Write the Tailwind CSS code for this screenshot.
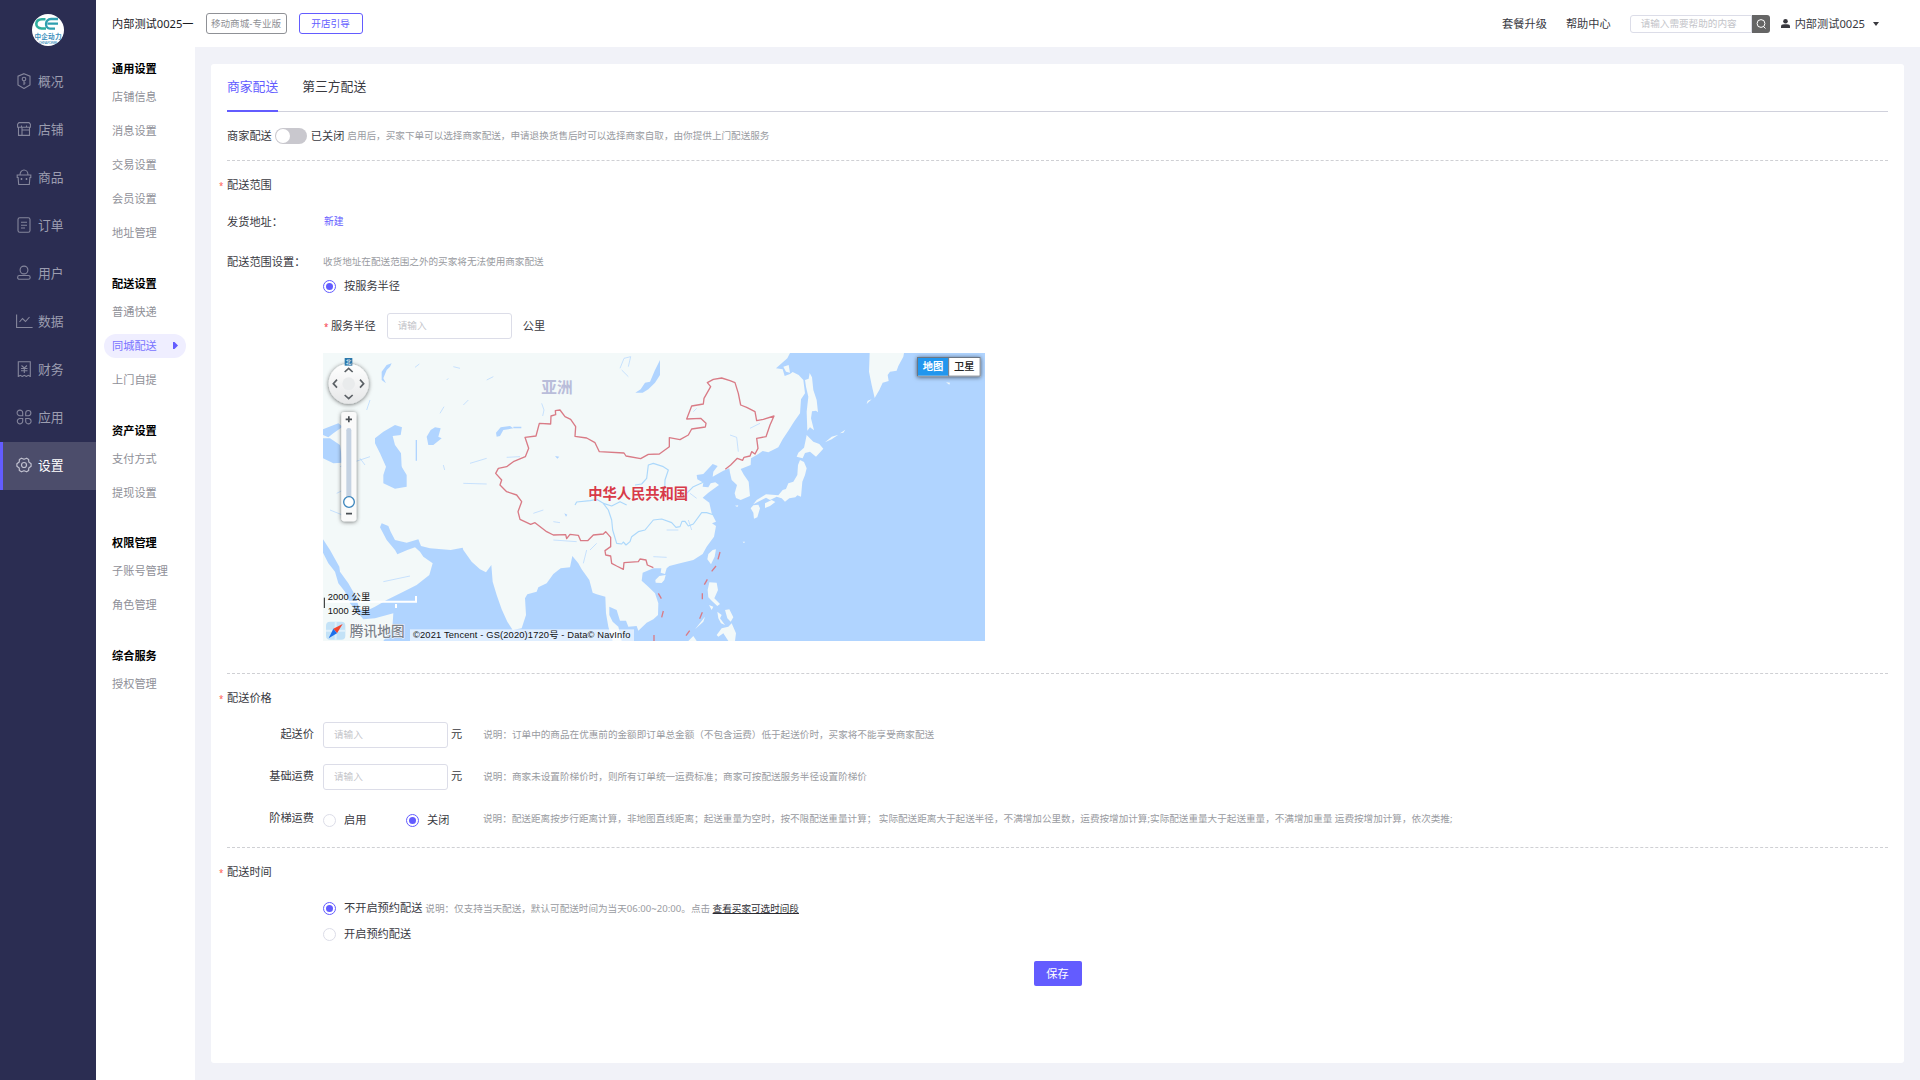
<!DOCTYPE html>
<html lang="zh-CN">
<head>
<meta charset="utf-8">
<title>同城配送</title>
<script src="https://cdn.jsdelivr.net/npm/@tailwindcss/browser@4"></script>
</head>
<body class="flex h-[1080px] w-[1920px] overflow-hidden bg-[#f1f2f8] font-['Noto_Sans','Noto_Sans_CJK_SC',sans-serif] text-[11.2px] leading-4 whitespace-nowrap text-[#39393f]">

<!-- Primary navigation -->
<nav class="flex h-full w-24 shrink-0 flex-col bg-[#2b2d52] text-[12.8px] text-[#9c9db0]">
  <div class="flex h-[58px] justify-center pt-[14px]">
    <svg class="size-8" viewBox="0 0 32 32">
      <circle cx="16" cy="16" r="16" fill="#fff"/>
      <path d="M13.5 5.2H10C2.5 5.5 2.5 14 9.500 14.500H14" fill="none" stroke="#2fae9f" stroke-width="2.600"/>
      <path d="M26 5H19C12.500 5 12.500 14.600 18 14.600H23M15.500 9.600H26" fill="none" stroke="#2f9fb0" stroke-width="2.300"/>
      <text x="2.500" y="25" font-size="6.600" font-weight="700" fill="#3d8fbd" textLength="27">中企动力</text>
      <text x="7" y="29.500" font-size="3.500" fill="#3d8fbd" textLength="18">CHINA POWER</text>
    </svg>
  </div>
  <a class="flex h-12 items-center gap-1.5 pb-0.5 pl-4"><svg class="size-4" viewBox="0 0 16 16" fill="none" stroke="#85869c" stroke-width="1.1"><path d="M8 .7 14 3.200V12L8 15.500 2 12V3.200Z"/><circle cx="8" cy="6" r="1.800"/><path d="M8 7.800V12M8 10h1.500"/></svg><span>概况</span></a>
  <a class="flex h-12 items-center gap-1.5 pb-0.5 pl-4"><svg class="size-4" viewBox="0 0 16 16" fill="none" stroke="#85869c" stroke-width="1.1"><path d="M3 1.600h10l1.400 1.600v3H1.600v-3ZM2.500 6.200v8.200h11V6.200M6 6.200v8M6 9h7.500M5.500 6.200V4.500M10.500 6.200V4.500"/></svg><span>店铺</span></a>
  <a class="flex h-12 items-center gap-1.5 pb-0.5 pl-4"><svg class="size-4" viewBox="0 0 16 16" fill="none" stroke="#85869c" stroke-width="1.1"><path d="M1.200 6h13.600v2.500h-.9l-.6 7H2.700l-.6-7h-.9ZM4 6a4 5 0 0 1 8 0"/><path d="M5.500 9v2M10.500 9v2" stroke-width="1.500"/></svg><span>商品</span></a>
  <a class="flex h-12 items-center gap-1.5 pb-0.5 pl-4"><svg class="size-4" viewBox="0 0 16 16" fill="none" stroke="#85869c" stroke-width="1.1"><rect x="2" y=".7" width="12" height="14.600" rx="1.800"/><path d="M5 5.200h6M5 8.200h6M5 11h4"/></svg><span>订单</span></a>
  <a class="flex h-12 items-center gap-1.5 pb-0.5 pl-4"><svg class="size-4" viewBox="0 0 16 16" fill="none" stroke="#85869c" stroke-width="1.1"><circle cx="8" cy="5" r="3.900"/><rect x="1.600" y="10.500" width="12.600" height="3.800" rx="1.900"/></svg><span>用户</span></a>
  <a class="flex h-12 items-center gap-1.5 pb-0.5 pl-4"><svg class="size-4 overflow-visible" viewBox="0 0 16 16" fill="none" stroke="#85869c" stroke-width="1.1"><path d="M.6 1.500v13h16M3.500 9 6.500 5.500 9.500 8.500 13.500 4"/></svg><span>数据</span></a>
  <a class="flex h-12 items-center gap-1.5 pb-0.5 pl-4"><svg class="size-4" viewBox="0 0 16 16" fill="none" stroke="#85869c" stroke-width="1.1"><path d="M2.300 15.500V.8h12v14.700l-2-1.200-2 1.200-2-1.200-2 1.200-2-1.200ZM5.500 4.500l2.800 2.500L11 4.500M5 7.500h6.500M5 9.800h6.500M8.300 7v5"/></svg><span>财务</span></a>
  <a class="flex h-12 items-center gap-1.5 pb-0.5 pl-4"><svg class="size-4" viewBox="0 0 16 16" fill="none" stroke="#85869c" stroke-width="1.1"><path d="M6.700 6.700H4A2.800 2.800 0 1 1 6.700 4ZM9.700 6.700V4a2.600 2.600 0 1 1 2.700 2.700ZM6.700 9.500V12A2.700 2.700 0 1 1 4 9.500ZM9.700 9.500h2.600A2.700 2.700 0 1 1 9.700 12Z"/></svg><span>应用</span></a>
  <a class="flex h-12 items-center gap-1.5 border-l-3 border-[#635cff] bg-[#4c4d6b] pb-0.5 pl-[13px] text-white"><svg class="size-4" viewBox="0 0 16 16" fill="none" stroke="#c0c0cf" stroke-width="1.200"><path d="M5.500 1.200 8 2.300l2.700-1.100 1.900 1.200.2 2.600 2.300 1.700v2.600L12.800 11l-.2 2.600-1.900 1.200L8 13.700l-2.500 1.100-2.100-1.200L3.200 11 .9 9.300V6.700L3.200 5l.2-2.600Z" stroke-linejoin="round"/><circle cx="8" cy="8" r="2.500"/></svg><span>设置</span></a>
</nav>

<div class="flex min-w-0 flex-1 flex-col">
  <!-- Top bar -->
  <header class="flex h-[47px] shrink-0 items-center bg-white pr-[41px] pl-4">
    <span class="text-[#1b1b1f]">内部测试0025一</span>
    <span class="ml-3 flex h-[21px] w-[81px] items-center justify-center rounded-[3px] border border-[#8f9196] text-[9.6px] text-[#8f9196]">移动商城-专业版</span>
    <span class="ml-3 flex h-[21px] w-16 items-center justify-center rounded-[3px] border border-[#635cff] text-[9.6px] text-[#635cff]">开店引导</span>
    <div class="ml-auto flex items-center">
      <span>套餐升级</span>
      <span class="ml-[19px]">帮助中心</span>
      <div class="ml-[19px] flex h-[18px] w-[122px] items-center rounded-l-[3px] border border-[#dcdde8] pl-[10px] text-[9.6px] text-[#c3c4c9]">请输入需要帮助的内容</div>
      <div class="flex h-[18px] w-[18px] items-center justify-center rounded-r-[3px] bg-[#656565]"><svg class="size-3" viewBox="0 0 12 12" fill="none" stroke="#fff"><circle cx="6" cy="5.500" r="3.900"/><path d="m8.500 8.500 2 2"/></svg></div>
      <svg class="ml-[11px] size-[9px]" viewBox="0 0 9 9" fill="#39393f"><circle cx="4.500" cy="2.300" r="2.300"/><path d="M0 9V7.500Q0 5.300 3 5.300h3Q9 5.300 9 7.500V9Z"/></svg>
      <span class="ml-[5px]">内部测试0025</span>
      <svg class="ml-2 h-1 w-1.5" viewBox="0 0 6 4" fill="#39393f"><path d="M0 0h6L3 4Z"/></svg>
    </div>
  </header>

  <div class="flex min-h-0 flex-1">
    <!-- Settings menu -->
    <aside class="flex w-[99px] shrink-0 flex-col gap-[22.700px] bg-white pt-[11.300px] text-[#8f9098]">
      <section>
        <h3 class="flex h-[22px] items-center pl-4 font-bold text-black">通用设置</h3>
        <div class="flex h-[34px] items-center pl-4">店铺信息</div>
        <div class="flex h-[34px] items-center pl-4">消息设置</div>
        <div class="flex h-[34px] items-center pl-4">交易设置</div>
        <div class="flex h-[34px] items-center pl-4">会员设置</div>
        <div class="flex h-[34px] items-center pl-4">地址管理</div>
      </section>
      <section>
        <h3 class="flex h-[22px] items-center pl-4 font-bold text-black">配送设置</h3>
        <div class="flex h-[34px] items-center pl-4">普通快递</div>
        <div class="flex h-[34px] items-center px-2"><div class="flex h-6 w-[82px] items-center justify-between rounded-full bg-[#efeeff] pr-2 pl-2 text-[#7a74ff]"><span>同城配送</span><svg class="h-[7px] w-[5px]" viewBox="0 0 5 7" fill="#635cff"><path d="M0 0h1.500L5 3.500 1.500 7H0Z"/></svg></div></div>
        <div class="flex h-[34px] items-center pl-4">上门自提</div>
      </section>
      <section>
        <h3 class="flex h-[22px] items-center pl-4 font-bold text-black">资产设置</h3>
        <div class="flex h-[34px] items-center pl-4">支付方式</div>
        <div class="flex h-[34px] items-center pl-4">提现设置</div>
      </section>
      <section>
        <h3 class="flex h-[22px] items-center pl-4 font-bold text-black">权限管理</h3>
        <div class="flex h-[34px] items-center pl-4">子账号管理</div>
        <div class="flex h-[34px] items-center pl-4">角色管理</div>
      </section>
      <section>
        <h3 class="flex h-[22px] items-center pl-4 font-bold text-black">综合服务</h3>
        <div class="flex h-[34px] items-center pl-4">授权管理</div>
      </section>
    </aside>

    <main class="flex-1 px-4 py-[17px]">
      <div class="flex h-[999px] flex-col rounded-[3px] bg-white px-4">
        <div class="flex h-12 shrink-0 items-stretch gap-6 border-b border-[#d0d1dc] text-[12.800px]">
          <div class="-mb-px flex items-center border-b-2 border-[#635cff] pb-0.5 text-[#635cff]">商家配送</div>
          <div class="flex items-center pb-[3px]">第三方配送</div>
        </div>

        <div class="flex h-12 shrink-0 items-center">
          <span>商家配送</span>
          <span class="ml-[3px] flex h-4 w-8 items-center rounded-full bg-[#c9c8ce] pl-px"><span class="size-[14px] rounded-full bg-white"></span></span>
          <span class="ml-1">已关闭</span>
          <span class="ml-[3px] text-[9.600px] text-[#999ba1]">启用后，买家下单可以选择商家配送，申请退换货售后时可以选择商家自取，由你提供上门配送服务</span>
        </div>

        <!-- Delivery range -->
        <section class="flex h-[513px] shrink-0 flex-col border-t border-dashed border-[#cfd0d4]">
          <h4 class="mt-4 -ml-2 flex h-4 items-center"><i class="w-2 pt-0.5 text-[8px] text-[#ff5a4f] not-italic">*</i>配送范围</h4>
          <div class="mt-[21px] flex h-4 items-center"><span class="w-24">发货地址：</span><a class="pl-px text-[9.800px] text-[#635cff]">新建</a></div>
          <div class="mt-6 flex h-4 items-center"><span class="w-24">配送范围设置：</span><span class="text-[9.600px] text-[#999ba1]">收货地址在配送范围之外的买家将无法使用商家配送</span></div>
          <div class="mt-[8px] ml-24 flex h-4 items-center gap-2"><span class="flex size-[13px] items-center justify-center rounded-full border border-[#635cff]"><i class="size-[7px] rounded-full bg-[#635cff]"></i></span>按服务半径</div>
          <div class="mt-[19px] ml-24 flex h-[26px] items-center"><i class="w-2 pt-0.5 pl-px text-[8px] text-[#f5333f] not-italic">*</i><span>服务半径</span><div class="ml-[11px] flex h-[26px] w-[125px] items-center rounded-[3px] border border-[#dcdde8] pl-[10px] text-[9.600px] text-[#c3c4c9]">请输入</div><span class="ml-[11px]">公里</span></div>

          <!-- Map -->
          <div class="mt-[14px] ml-24 h-72 w-[662px] overflow-hidden">
            <svg class="h-72 w-[662px]" viewBox="9 9 1986 864">
              <defs>
                <linearGradient id="knob" x1="0" y1="0" x2="0" y2="1"><stop offset="0" stop-color="#fff"/><stop offset="1" stop-color="#e6e7e8"/></linearGradient>
                <filter id="shade" x="-30%" y="-30%" width="160%" height="160%"><feDropShadow dx="0" dy="2" stdDeviation="6" flood-color="#000" flood-opacity=".6"/></filter>
              </defs>
              <rect x="9" y="9" width="1986" height="864" fill="#f3f9f9"/>
              <g fill="#b0d4ff">
                <!-- ocean -->
                <path d="M1410 9 1402 25 1385 40 1368 55 1388 58 1394 78 1410 72 1418 66 1436 75 1450 90 1455 130 1443 148 1440 190 1422 215 1405 242 1388 268 1375 292 1345 307 1328 303 1315 312 1293 325 1292 345 1262 357 1272 375 1286 395 1290 438 1262 450 1248 444 1244 430 1251 405 1235 390 1230 368 1228 355 1210 362 1178 380 1180 365 1193 348 1178 342 1150 372 1130 375 1132 388 1150 398 1148 410 1165 412 1172 400 1186 397 1197 405 1165 428 1148 443 1168 458 1175 490 1188 515 1176 520 1188 528 1182 560 1160 590 1148 612 1120 630 1080 640 1048 648 1040 655 1035 672 1022 668 1024 655 1000 655 968 668 965 692 985 710 1005 730 1015 760 1014 795 1000 808 980 818 955 842 950 828 925 830 918 812 900 812 890 780 868 770 868 795 878 815 895 830 905 873 878 873 865 830 858 790 856 740 830 733 818 728 808 690 785 658 775 640 757 618 750 652 722 655 700 672 680 700 655 712 650 725 622 733 615 745 618 795 605 835 578 840 562 815 545 778 530 735 518 695 514 645 498 667 480 658 455 635 430 600 428 593 392 600 330 595 303 588 295 568 260 578 225 570 212 545 205 528 185 520 180 532 200 570 225 600 232 613 262 600 285 592 300 605 310 620 338 640 328 675 290 705 250 725 200 750 165 770 140 782 118 778 108 740 85 700 60 665 58 650 30 600 9 568V608L25 640 45 665 55 700 75 725 90 760 130 808 165 805 220 790 217 835 190 873H1995V9Z"/>
                <!-- inland seas and lakes -->
                <path d="M9 265H30L60 285 68 338 40 340 9 325ZM9 238 55 220 68 230 40 250 25 262 9 255Z"/>
                <path d="M190 245 225 225 246 232 242 255 218 258 225 285 243 310 245 350 260 375 260 410 225 416 190 400V375L198 350 180 310 165 280 165 265Z"/>
                <path d="M325 285 320 260 332 240 345 232 362 235 355 260 365 265 340 285ZM287 270H291V332H287ZM528 248 542 232 570 228 580 235 550 240 540 258 530 260ZM580 230H604V235H580Z"/>
                <path d="M1020 30V75L1005 98 985 118 968 128 946 128 962 118 975 98 990 95 1005 60ZM185 65 200 45 215 40 210 50 200 60 190 85 198 100 185 90ZM705 318 718 320 712 326ZM733 490 742 494 738 500Z"/>
              </g>
              <g fill="none" stroke="#b0d4ff" stroke-width="2">
                <path d="M285 52 298 42M140 180 150 150M360 190 372 170M430 165 445 150M380 90 385 85M500 90 520 80M900 55 912 25 932 20 925 50M905 60 925 80M665 160 672 180 668 198M450 340 500 325M430 400 500 402M600 320 560 322M190 695 270 678M60 350 150 320M50 430 80 415M30 480 80 500M120 325 135 345M640 490 670 480M700 515 720 518M700 570 770 575M810 600 830 580M790 640 800 600M400 50 420 55M370 345 374 360M220 360 245 350M1120 185 1130 175M1230 255 1250 262 1255 305M1290 235 1320 220M1000 620 1040 622M1110 430 1130 445M1040 540 1075 540M1105 510 1115 540"/>
              </g>
              <!-- rivers -->
              <g fill="none" stroke="#acd8fb" stroke-width="3.500" stroke-linejoin="round">
                <path d="M765 465 770 456 810 452 830 448 850 460 865 480 875 510 878 540 890 580 905 582 910 576 918 585 930 575 935 560 955 545 975 540 1000 510 1025 507 1055 518 1068 532 1080 530 1086 514 1095 514 1105 528 1120 522 1145 488 1160 488 1182 495"/>
                <path d="M850 460 875 468 900 455 920 465M945 405 965 402 980 385 985 345 1000 340 1030 350 1045 360 1035 390 1034 420M1090 440 1120 410 1150 397"/>
              </g>
              <!-- islands -->
              <g fill="#f3f9f9">
                <path d="M1649 9H1752L1750 20 1735 48 1730 62 1710 65 1703 75 1706 93 1688 98 1678 120 1664 144 1655 105 1647 65ZM1655 148 1640 162 1643 152ZM1878 97 1890 98 1888 104Z"/>
                <path d="M1455 90 1466 86 1469 69 1476 82 1480 120 1490 150 1494 187 1488 182 1476 184 1473 205 1482 241 1470 232 1462 242 1460 185 1465 140 1458 110Z"/>
                <path d="M1460 255 1480 275 1498 282 1510 296 1488 320 1470 305 1455 309 1448 325 1430 320 1435 308 1452 293 1455 280ZM1515 277 1535 260 1555 254 1535 268ZM1560 250 1576 239 1570 248Z"/>
                <path d="M1440 330 1452 336 1460 355 1455 375 1447 395 1443 440 1432 436 1426 442 1408 445 1395 455 1385 445 1370 440 1350 450 1338 443 1300 463 1310 450 1338 433 1375 436 1388 420 1398 417 1405 400 1420 395 1432 375 1434 345Z"/>
                <path d="M1335 460 1355 450 1366 456 1350 468 1335 474ZM1300 466 1315 464 1320 475 1312 502 1302 506 1300 488 1292 475Z"/>
                <path d="M1165 612 1178 600 1188 598 1184 620 1173 643 1162 628ZM1006 690 1018 678 1037 675 1033 690 1025 699 1007 698Z"/>
                <path d="M1168 697 1190 698 1194 720 1183 745 1200 762 1192 768 1175 752 1165 742 1163 720ZM1125 838 1155 800 1150 815ZM1190 855 1205 835 1225 830 1235 820 1248 850 1245 873 1225 873 1210 850 1195 860ZM1192 785 1205 795 1200 805 1215 825 1203 820 1195 805ZM1215 780 1228 778 1240 802 1232 815 1222 805ZM1105 873 1120 858 1130 873ZM1167 765 1180 770 1175 780ZM1390 50 1406 45 1410 68 1398 65ZM1245 467 1255 466 1252 471ZM1268 575 1275 575 1272 580Z"/>
              </g>
              <!-- borders -->
              <g fill="none" stroke="#d97b86" stroke-width="4" stroke-linejoin="round">
                <path d="M1216 358 1232 345 1252 325 1268 331 1272 322 1290 318 1295 305 1305 312 1314 295 1310 265 1338 260 1350 225 1362 198 1330 208 1310 212 1305 185 1280 172 1262 165 1255 130 1245 98 1230 92 1205 84 1180 88 1162 98 1172 110 1152 145 1150 162 1115 168 1100 207 1142 205 1158 220 1156 231 1115 237 1105 255 1080 269 1048 263 1048 290 1018 312 985 313 962 326 918 318 912 309 838 305 825 278 800 264 765 259 767 230 752 208 735 200 720 180 706 182 707 194 693 198 692 222 658 220 648 258 615 262 626 295 616 320 580 335 560 350 535 355 527 370 545 390 540 405 560 425 590 435 605 455 594 485 600 508 632 523 645 518 680 545 700 555 737 554 740 566 750 553 775 556 782 572 803 572 820 555 850 552 857 545 872 562 872 590 855 602 857 615 872 618 875 640 890 648 910 658 912 638 955 635 960 627 978 630 982 645 1000 653"/>
                <path d="M1200 606 1194 628M1188 648 1175 664M1162 688 1153 704M1147 730V748M1147 787 1139 806M1109 842 1098 857M1015 730 1024 746M1030 783 1025 802M1002 855V873"/>
              </g>
              <text x="664" y="129" font-size="47" font-weight="700" fill="#b9bdda" textLength="94">亚洲</text>
              <text x="805" y="447" font-size="43" font-weight="700" fill="#d83a48" textLength="299">中华人民共和国</text>

              <!-- pan control -->
              <circle cx="86" cy="101" r="60" fill="url(#knob)" filter="url(#shade)"/>
              <circle cx="86" cy="101" r="19" fill="#e9ebec"/>
              <path d="m74 66 12-11 12 11M74 135l12 11 12-11M51 89l-11 12 11 12M120 89l11 12-11 12" fill="none" stroke="#5c6166" stroke-width="5"/>
              <rect x="74" y="24" width="23" height="23" fill="#2b78ab"/>
              <text x="77" y="42" font-size="17" fill="#fff">北</text>
              <!-- zoom control -->
              <rect x="64" y="186" width="45" height="328" rx="9" fill="#fafafa" filter="url(#shade)"/>
              <rect x="79" y="234" width="15" height="222" rx="7" fill="#c5d2e2"/>
              <path d="M77 208h19M86.500 199v18M78 491h18" stroke="#4a4f54" stroke-width="5"/>
              <circle cx="87" cy="456" r="16" fill="#fff" stroke="#3d86bd" stroke-width="4"/>
              <!-- scale -->
              <path d="M15 755H291M288 738V758M228 762V774" stroke="#fff" stroke-width="6"/>
              <path d="M13 743V774" stroke="#222" stroke-width="3"/>
              <g font-family="Liberation Sans, Noto Sans CJK SC, sans-serif" fill="#111" font-size="28">
                <text x="23" y="749" textLength="128">2000 公里</text>
                <text x="23" y="791" textLength="128">1000 英里</text>
              </g>
              <!-- logo and copyright -->
              <rect x="18" y="815" width="58" height="54" rx="12" fill="#c3e2f7"/>
              <path d="M18 842H76M47 815V869" stroke="#dff0fb" stroke-width="6"/>
              <path d="M68 822 40 836 51 850Z" fill="#f2452e"/>
              <path d="M26 865 40 836 51 850Z" fill="#1d6fea"/>
              <text x="89" y="859" font-size="41" font-weight="500" fill="#7b828b" stroke="#fff" stroke-width="3" paint-order="stroke" textLength="165">腾讯地图</text>
              <rect x="270" y="838" width="672" height="35" fill="#fff" fill-opacity=".6"/>
              <text x="279" y="863" font-family="Liberation Sans, Noto Sans CJK SC, sans-serif" font-size="28" fill="#111" textLength="652">©2021 Tencent - GS(2020)1720号 - Data© NavInfo</text>
              <!-- map type switch -->
              <rect x="1791" y="21" width="191" height="59" fill="#fff" filter="url(#shade)"/>
              <rect x="1792.500" y="22.500" width="188" height="56" fill="#fff" stroke="#6b7684" stroke-width="3"/>
              <rect x="1794" y="24" width="91" height="53" fill="#2196ee"/>
              <path d="M1886 22V79" stroke="#6b7684" stroke-width="3"/>
              <text x="1808" y="61" font-size="31" font-weight="700" fill="#fff">地图</text>
              <text x="1902" y="61" font-size="31" font-weight="500" fill="#222">卫星</text>
            </svg>
          </div>
        </section>

        <!-- Delivery price -->
        <section class="flex h-[174px] shrink-0 flex-col border-t border-dashed border-[#cfd0d4]">
          <h4 class="mt-4 -ml-2 flex h-4 items-center"><i class="w-2 pt-0.5 text-[8px] text-[#ff5a4f] not-italic">*</i>配送价格</h4>
          <div class="mt-4 flex h-[26px] items-center">
            <span class="w-[87px] pb-0.5 text-right">起送价</span>
            <div class="ml-[9px] flex h-[26px] w-[125px] items-center rounded-[3px] border border-[#dcdde8] pl-[10px] text-[9.600px] text-[#c3c4c9]">请输入</div>
            <span class="ml-[3px] pb-0.5">元</span>
            <span class="ml-[21px] text-[9.600px] text-[#999ba1]">说明：订单中的商品在优惠前的金额即订单总金额（不包含运费）低于起送价时，买家将不能享受商家配送</span>
          </div>
          <div class="mt-4 flex h-[26px] items-center">
            <span class="w-[87px] pb-0.5 text-right">基础运费</span>
            <div class="ml-[9px] flex h-[26px] w-[125px] items-center rounded-[3px] border border-[#dcdde8] pl-[10px] text-[9.600px] text-[#c3c4c9]">请输入</div>
            <span class="ml-[3px] pb-0.5">元</span>
            <span class="ml-[21px] text-[9.600px] text-[#999ba1]">说明：商家未设置阶梯价时，则所有订单统一运费标准；商家可按配送服务半径设置阶梯价</span>
          </div>
          <div class="mt-4 flex h-[26px] items-center">
            <span class="w-[87px] pb-0.5 text-right">阶梯运费</span>
            <span class="ml-[9px] flex w-[83px] items-center gap-2 pt-0.5"><i class="size-[13px] rounded-full border border-[#dcdde8]"></i>启用</span>
            <span class="flex w-[77px] items-center gap-2 pt-0.5"><span class="flex size-[13px] items-center justify-center rounded-full border border-[#635cff]"><i class="size-[7px] rounded-full bg-[#635cff]"></i></span>关闭</span>
            <span class="text-[9.600px] text-[#999ba1]">说明：配送距离按步行距离计算，非地图直线距离；起送重量为空时，按不限配送重量计算； 实际配送距离大于起送半径，不满增加公里数，运费按增加计算;实际配送重量大于起送重量，不满增加重量 运费按增加计算，依次类推;</span>
          </div>
        </section>

        <!-- Delivery time -->
        <section class="flex shrink-0 flex-col border-t border-dashed border-[#cfd0d4]">
          <h4 class="mt-4 -ml-2 flex h-4 items-center"><i class="w-2 pt-0.5 text-[8px] text-[#ff5a4f] not-italic">*</i>配送时间</h4>
          <div class="mt-5 ml-24 flex h-4 items-center"><span class="flex size-[13px] items-center justify-center rounded-full border border-[#635cff]"><i class="size-[7px] rounded-full bg-[#635cff]"></i></span><span class="ml-2">不开启预约配送</span><span class="ml-[3px] pt-px text-[9.600px] text-[#999ba1]">说明：仅支持当天配送，默认可配送时间为当天06:00~20:00。点击 <a class="text-[#2c2c33] underline">查看买家可选时间段</a></span></div>
          <div class="mt-[10px] ml-24 flex h-4 items-center gap-2"><i class="size-[13px] rounded-full border border-[#dcdde8]"></i>开启预约配送</div>
          <button class="mt-[19px] flex h-[25px] w-12 items-center justify-center self-center rounded-[2px] bg-[#635cff] text-white">保存</button>
        </section>
      </div>
    </main>
  </div>
</div>
</body>
</html>
